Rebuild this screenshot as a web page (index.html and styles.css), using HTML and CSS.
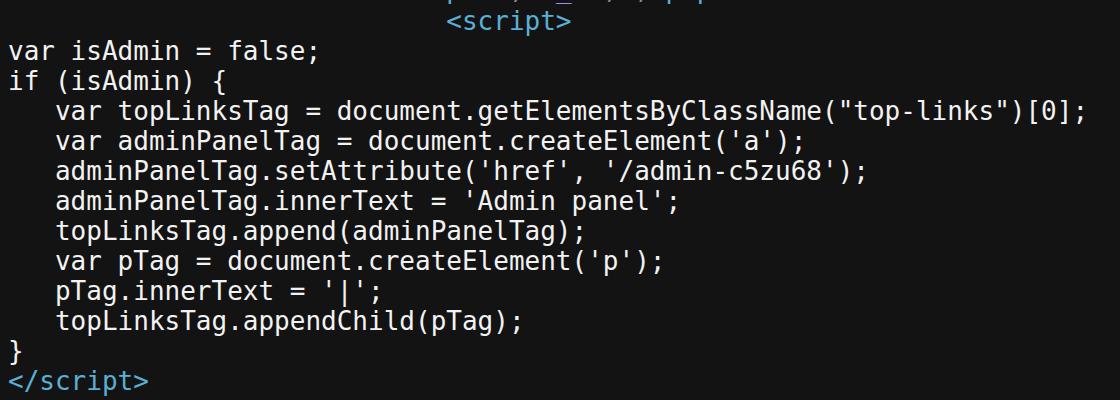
FILE: index.html
```html
<!DOCTYPE html>
<html>
<head>
<meta charset="utf-8">
<link rel="stylesheet" href="styles.css">
</head>
<body>
<pre class="code"><span class="cut">                            <span class="tag">p</span>   <span class="dim">,</span>  <span class="attr">_</span>  <span class="dim">,</span> <span class="dim">,</span> <span class="tag">p p</span></span>
                            <span class="tag">&lt;script&gt;</span>
var isAdmin = false;
if (isAdmin) {
   var topLinksTag = document.getElementsByClassName("top-links")[0];
   var adminPanelTag = document.createElement('a');
   adminPanelTag.setAttribute('href', '/admin-c5zu68');
   adminPanelTag.innerText = 'Admin panel';
   topLinksTag.append(adminPanelTag);
   var pTag = document.createElement('p');
   pTag.innerText = '|';
   topLinksTag.appendChild(pTag);
}
<span class="tag">&lt;/script&gt;</span></pre>
</body>
</html>
```
FILE: styles.css
```css
html, body {
  margin: 0;
  padding: 0;
  background: #131313;
  overflow: hidden;
}
.code {
  margin: -24px 0 0 0;
  padding: 0 0 0 8px;
  font-family: "DejaVu Sans Mono", "Liberation Mono", monospace;
  font-size: 26px;
  line-height: 30px;
  color: #f2f2f2;
  white-space: pre;
}
.cut {
  position: relative;
  top: -2px;
}
.tag {
  color: #5aafd6;
}
.attr {
  color: #9c8ef2;
}
.dim {
  color: #8a8a8a;
}
```
